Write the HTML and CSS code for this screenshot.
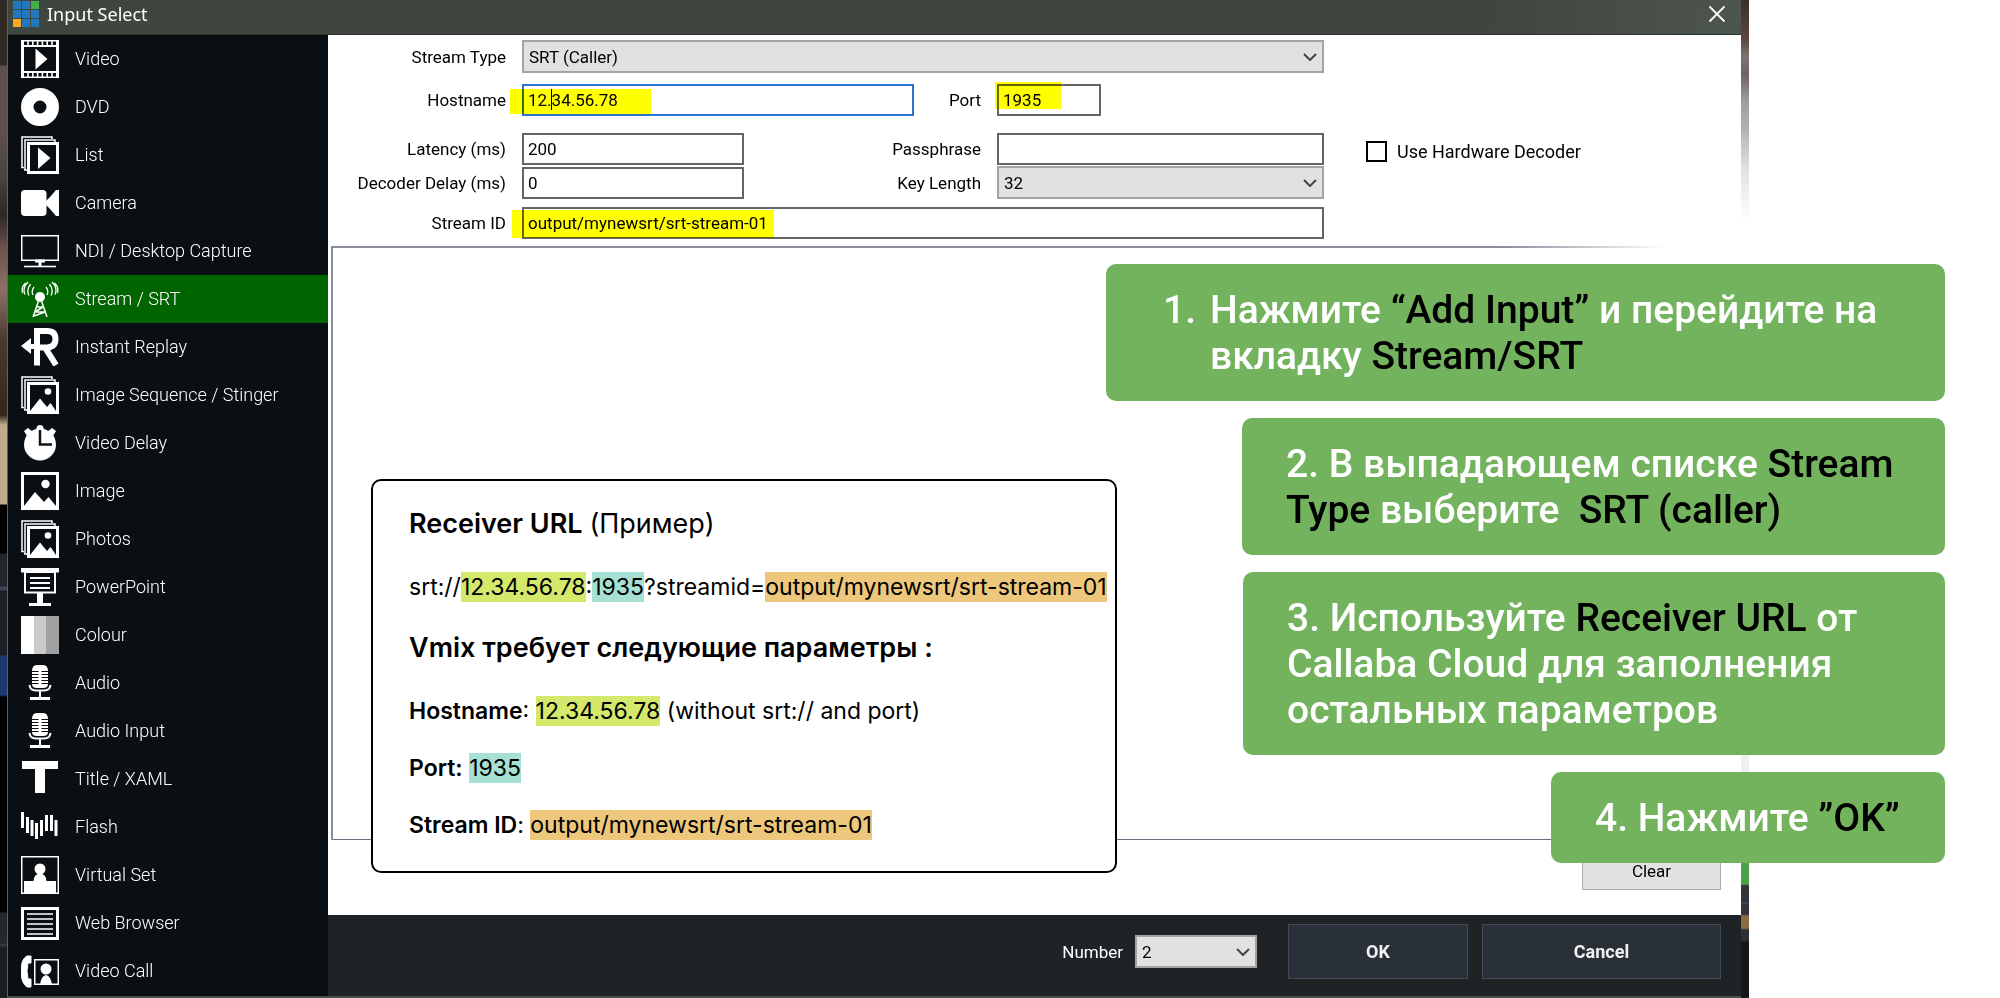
FILE: index.html
```html
<!DOCTYPE html>
<html lang="ru">
<head>
<meta charset="utf-8">
<title>Input Select</title>
<link rel="stylesheet" href="styles.css">
</head>
<body>
<svg class="sprite" aria-hidden="true">
  <symbol id="stack" viewBox="0 0 38 38">
    <path d="M1 31V1H31V3M0 31.500H3M4 34V4H34V6M3 34H6" fill="none" stroke="#fff" stroke-width="1.500"/>
    <rect x="7.500" y="7.500" width="29" height="29" fill="none" stroke="#fff" stroke-width="3"/>
  </symbol>
  <symbol id="photos" viewBox="0 0 38 38">
    <use href="#stack"/>
    <circle cx="27" cy="15.500" r="3.300" fill="#fff"/>
    <path d="M9 35 19 22.500 26 31 29.500 27 35 35V37H9Z" fill="#fff"/>
  </symbol>
  <symbol id="mic" viewBox="0 0 38 38">
    <path d="M11 7Q11 1 16 1H22Q27 1 27 7V20Q27 24 22 24H16Q11 24 11 20Z" fill="#fff"/>
    <path d="M11 7.500H17.500M20.500 7.500H27M11 10.500H17.500M20.500 10.500H27M11 13.500H17.500M20.500 13.500H27M11 16.500H17.500M20.500 16.500H27M11 19.500H17.500M20.500 19.500H27" stroke="#090f13" stroke-width="1.200"/>
    <path d="M8.500 21Q9 26.500 15 26.500H23Q29 26.500 29.500 21M19 26V33" fill="none" stroke="#fff" stroke-width="2"/>
    <path d="M9 34.500H29" stroke="#fff" stroke-width="3"/>
  </symbol>
</svg>
<div class="stage">
  <div class="desk desk-left"></div>
  <main class="window">
    <header class="titlebar">
      <svg class="logo" viewBox="0 0 26 26"><g fill="#2277c1"><path d="M0 0h8v8H0zM9 0h8v8H9zM0 9h8v8H0zM9 9h8v8H9zM18 9h8v8h-8zM9 18h8v8H9zM18 18h8v8h-8z"/></g><path fill="#44b049" d="M18 0h8v8h-8z"/><path fill="#fba91b" d="M0 18h8v8H0z"/></svg>
      <h1>Input Select</h1>
      <button class="close" aria-label="Close"><svg viewBox="0 0 18 18"><path d="M1.500 1.500 16.500 16.500M16.500 1.500 1.500 16.500" stroke="#fff" stroke-width="1.800"/></svg></button>
    </header>
    <div class="body">
      <nav class="sidebar">
        <button><svg viewBox="0 0 38 38"><path d="M0 0H38V38H0Z" fill="#fff"/><path d="M3 7H35V31H3Z" fill="#090f13"/><path d="M3 3.200H36M3 34.800H36" stroke="#090f13" stroke-width="3.400" stroke-dasharray="3.200 1.600"/><path d="M14.500 8.500 26.500 19 14.500 29.500Z" fill="#fff"/></svg>Video</button>
        <button><svg viewBox="0 0 38 38"><circle cx="19" cy="19" r="12.750" fill="none" stroke="#fff" stroke-width="12.500"/></svg>DVD</button>
        <button><svg viewBox="0 0 38 38"><use href="#stack"/><path d="M17 11.500 29.500 22 17 33Z" fill="#fff"/></svg>List</button>
        <button><svg viewBox="0 0 38 38"><rect y="6" width="25.500" height="26" rx="4" fill="#fff"/><path d="M25 17 29 13 35 6H38V32H35L29 25 25 21Z" fill="#fff"/></svg>Camera</button>
        <button><svg viewBox="0 0 38 38"><rect x=".750" y="3.750" width="36.500" height="24.500" fill="none" stroke="#fff" stroke-width="1.500"/><path d="M14 29H24M19 29V34" stroke="#fff" stroke-width="3"/><path d="M3 34.500H35" stroke="#fff" stroke-width="1.600"/></svg>NDI / Desktop Capture</button>
        <button class="active"><svg viewBox="0 0 38 38"><circle cx="19" cy="17" r="5" fill="#fff"/><path d="M17.500 21 12 37M20.500 21 26 37M16 27H22M14 32H24M13 36 24 32M14 32 22 27" fill="none" stroke="#fff" stroke-width="1.500"/><path d="M12 15Q10 11 13 7M8 15.500Q5 10 9.500 4M4 14.500Q1 8 7 2M1.500 13Q0 7 4.500 3M26 15Q28 11 25 7M30 15.500Q33 10 28.500 4M34 14.500Q37 8 31 2M36.500 13Q38 7 33.500 3" fill="none" stroke="#fff" stroke-width="1.300"/></svg>Stream / SRT</button>
        <button><svg viewBox="0 0 38 38"><path d="M16 37.500V3H26Q34.500 3 34.500 11T26 19.500H14M24 19.500 35 37" fill="none" stroke="#fff" stroke-width="6"/><path d="M0 18 10 10V16H14V21H10V26Z" fill="#fff"/></svg>Instant Replay</button>
        <button><svg viewBox="0 0 38 38"><use href="#photos"/></svg>Image Sequence / Stinger</button>
        <button><svg viewBox="0 0 38 38"><circle cx="19" cy="20.500" r="16" fill="#fff"/><path d="M3 7 7 4 12 8 6 12ZM35 7 31 4 26 8 32 12Z" fill="#fff"/><circle cx="19" cy="4.500" r="3.500" fill="#fff"/><path d="M19 6V20.500H31" fill="none" stroke="#10161a" stroke-width="2.500"/></svg>Video Delay</button>
        <button><svg viewBox="0 0 38 38"><rect x="1.500" y="1.500" width="35" height="35" fill="none" stroke="#fff" stroke-width="3"/><circle cx="24.500" cy="12" r="4.200" fill="#fff"/><path d="M3 34 14 20 23 30 27.500 25 35 34V36H3Z" fill="#fff"/></svg>Image</button>
        <button><svg viewBox="0 0 38 38"><use href="#photos"/></svg>Photos</button>
        <button><svg viewBox="0 0 38 38"><path d="M0 0H38V4.500H0ZM16 25H22V35H30V38H8V35H16Z" fill="#fff"/><rect x="4" y="4" width="30" height="20.500" fill="none" stroke="#fff" stroke-width="2"/><path d="M9 10H29M9 15H29M9 20H29" stroke="#fff" stroke-width="1.800"/></svg>PowerPoint</button>
        <button><svg viewBox="0 0 38 38"><path d="M0 0h13v38H0z" fill="#fff"/><path d="M13 0h12v38H13z" fill="#cacaca"/><path d="M25 0h13v38H25z" fill="#a0a0a0"/></svg>Colour</button>
        <button><svg viewBox="0 0 38 38"><use href="#mic"/></svg>Audio</button>
        <button><svg viewBox="0 0 38 38"><use href="#mic"/></svg>Audio Input</button>
        <button><svg viewBox="0 0 38 38"><rect x="1" y="1" width="36" height="8" fill="#fff"/><rect x="14" y="1" width="10" height="32" fill="#fff"/></svg>Title / XAML</button>
        <button><svg viewBox="0 0 38 38"><path d="M1.500 4V20M6.500 9V25M11 12V28M15.500 15V31M20.500 12V28M25.500 7V23M30.500 7V23M35 12V28" stroke="#fff" stroke-width="3"/></svg>Flash</button>
        <button><svg viewBox="0 0 38 38"><rect x=".750" y=".750" width="36.500" height="36.500" fill="none" stroke="#fff" stroke-width="1.500"/><circle cx="19" cy="13" r="5.500" fill="#fff"/><path d="M3 25H12.500Q13 19 17 18H21Q25 19 25.500 25H35V37H3Z" fill="#fff"/></svg>Virtual Set</button>
        <button><svg viewBox="0 0 38 38"><rect x="1.500" y="4.500" width="35" height="30" fill="none" stroke="#fff" stroke-width="3"/><path d="M6 10H32M6 15H32M6 20H32M6 25H32M6 30H32" stroke="#fff" stroke-width="1.500"/></svg>Web Browser</button>
        <button><svg viewBox="0 0 38 38"><path d="M8 4H10V11H7Q5 19 7 27H10V35H6Q0 31 0 19T6 4Z" fill="#fff" stroke="#fff" stroke-linejoin="round"/><rect x="13.750" y="7.750" width="23.500" height="24.500" fill="none" stroke="#fff" stroke-width="1.500"/><circle cx="25" cy="17" r="5.500" fill="#fff"/><path d="M19 33Q20 24 25 23 30 24 31 33Z" fill="#fff"/></svg>Video Call</button>
      </nav>
      <section class="panel">
        <form class="form" id="stream-form">
          <div class="fields">
            <div class="row">
              <label for="type">Stream Type</label>
              <div class="field grow"><select id="type"><option>SRT (Caller)</option></select><svg class="arrow" viewBox="0 0 14 8"><path d="M1 1 7 7 13 1"/></svg></div>
            </div>
            <div class="row row-host">
              <label for="host">Hostname</label>
              <div class="field grow"><input id="host" class="focused" value="12.34.56.78"><i class="marker marker-host"></i><i class="caret"></i></div>
              <label for="port" class="label-short">Port</label>
              <div class="side"><div class="field port"><input id="port" value="1935"><i class="marker marker-port"></i></div></div>
            </div>
            <div class="row row-latency">
              <label for="latency">Latency (ms)</label>
              <div class="field small"><input id="latency" value="200"></div>
              <label for="pass" class="label-grow">Passphrase</label>
              <div class="field side"><input id="pass"></div>
            </div>
            <div class="row row-delay">
              <label for="delay">Decoder Delay (ms)</label>
              <div class="field small"><input id="delay" value="0"></div>
              <label for="key" class="label-grow">Key Length</label>
              <div class="field side"><select id="key"><option>32</option></select><svg class="arrow" viewBox="0 0 14 8"><path d="M1 1 7 7 13 1"/></svg></div>
            </div>
            <div class="row row-id">
              <label for="sid">Stream ID</label>
              <div class="field grow"><input id="sid" value="output/mynewsrt/srt-stream-01"><i class="marker marker-id"></i></div>
            </div>
          </div>
          <label class="check"><input type="checkbox">Use Hardware Decoder</label>
        </form>
        <div class="listbox"></div>
        <div class="clear-row"><button class="clear">Clear</button></div>
        <footer class="footer">
          <label for="num">Number</label>
          <div class="field number"><select id="num"><option>2</option></select><svg class="arrow" viewBox="0 0 14 8"><path d="M1 1 7 7 13 1"/></svg></div>
          <button class="ok">OK</button>
          <button class="cancel">Cancel</button>
        </footer>
      </section>
    </div>
  </main>
  <div class="desk desk-right"></div>

  <aside class="note">
    <h2>Receiver URL <span>(Пример)</span></h2>
    <p>srt://<mark class="lime">12.34.56.78</mark>:<mark class="mint">1935</mark>?streamid=<mark class="sand">output/mynewsrt/srt-stream-01</mark></p>
    <h2>Vmix требует следующие параметры :</h2>
    <p><b>Hostname</b>: <mark class="lime">12.34.56.78</mark> (without srt:// and port)</p>
    <p><b>Port:</b> <mark class="mint">1935</mark></p>
    <p><b>Stream ID</b>: <mark class="sand">output/mynewsrt/srt-stream-01</mark></p>
  </aside>

  <div class="steps">
    <div class="step step-1"><span>1.</span><p>Нажмите <b>“Add Input”</b> и перейдите на вкладку <b>Stream/SRT</b></p></div>
    <div class="step step-2"><p>2. В выпадающем списке <b>Stream Type</b> выберите &nbsp;<b>SRT (caller)</b></p></div>
    <div class="step step-3"><p>3. Используйте <b>Receiver URL</b> от Callaba Cloud для заполнения остальных параметров</p></div>
    <div class="step step-4"><p>4. Нажмите <b>”OK”</b></p></div>
  </div>
</div>
</body>
</html>
```

FILE: styles.css
```css
* { box-sizing: border-box; }
body { margin: 0; background: #fff; font-family: Roboto, "Liberation Sans", sans-serif; font-size: 17px; color: #000; }
h1, h2, p { margin: 0; }
button, input, select { font: inherit; color: inherit; border-radius: 0; }
.sprite { position: absolute; width: 0; height: 0; }

.stage { position: relative; display: grid; grid-template-columns: 7px 1fr 8px 251px; min-height: 100vh; overflow: hidden; }
.desk-left { background: linear-gradient(#2f2823 0 65px, #5c514c 66px 130px, #4a403c 180px, #2c2626 214px, #6e5450 250px, #8d7068 290px, #4a3932 340px, #33261e 415px, #c0ab8c 425px 504px, #000 505px 553px, #22262c 554px 586px, #3e4854 587px 590px, #1c2026 591px 655px, #1d3a70 656px 695px, #000 697px 912px, #24282e 913px 943px, #343a44 945px, #1a1e22 948px); }
.desk-right { background: linear-gradient(#3b2f28, #5c4840 40px, #7d7471 56px, #6f6462 75px, #9c9a9b 100px, #b5b3b4 130px, #e5e0e0 170px, #fff 220px 730px, #f0f0f0 745px 770px, #4da04a 862px 884px, #30353a 886px 902px, #454c55 903px, #30353a 905px 914px, #8a6b42 916px 928px, #2c3136 930px 940px, #14181b 942px); }
.window { display: flex; flex-direction: column; min-width: 0; border-left: 1px solid #5c635c; border-bottom: 2px solid #4a4f4d; }

.titlebar { display: flex; gap: 8px; height: 35px; padding: 1px 15px 0 5px; background: linear-gradient(100deg, #3f463f 85%, #4c554e); color: #fff; border-bottom: 1px solid #2c322c; }
.logo { width: 26px; height: 26px; }
.titlebar h1 { flex: 1; font: 400 18px/26px "Noto Sans", sans-serif; }
.close { width: 18px; height: 26px; padding: 0; border: 0; background: none; }
.close svg { display: block; width: 18px; height: 26px; }

.body { display: flex; flex: 1; }
.sidebar { width: 320px; flex: none; background: #090f13; }
.sidebar button { display: flex; align-items: center; gap: 16px; width: 100%; height: 48px; padding: 0 13px 1px; border: 0; background: none; color: #fff; font-size: 18px; font-weight: 300; text-align: left; white-space: nowrap; }
.sidebar .active { background: #006400; }
.sidebar svg { width: 38px; height: 38px; flex: none; }

.panel { display: flex; flex: 1; flex-direction: column; min-width: 0; background: #fff; }
.form { display: flex; gap: 42px; padding-top: 5px; white-space: nowrap; }
.fields { width: 996px; }
.row { display: flex; align-items: center; gap: 16px; height: 33px; }
.row > label { width: 178px; text-align: right; }
.row > .label-short { width: 51px; }
.row > .label-grow { flex: 1; width: auto; }
.row-host { margin-top: 10px; }
.row-latency { margin-top: 16px; }
.row-delay { margin-top: 1px; }
.row-id { margin-top: 7px; }
.field { position: relative; }
.grow { flex: 1; }
.small { width: 222px; }
.side { width: 327px; flex: none; }
.port { width: 104px; }
.field input, .field select { display: block; width: 100%; height: 32px; padding: 0 4px; border: 2px solid #666; background: #fff; appearance: none; outline: 0; }
.field select { height: 33px; padding: 0 5px; border-color: #a3a3a3; background: #e1e1e1; }
.field .focused { border-color: #2a74cf; }
.arrow { position: absolute; right: 7px; top: 13px; width: 14px; height: 8px; fill: none; stroke: #444; stroke-width: 2; pointer-events: none; }
.marker { position: absolute; background: #ff0; mix-blend-mode: multiply; pointer-events: none; }
.marker-host { left: -12px; top: 5px; width: 141px; height: 25px; }
.marker-port { left: -2px; top: -2px; width: 66px; height: 27px; }
.marker-id { left: -10px; top: 3px; width: 262px; height: 28px; }
.caret { position: absolute; left: 29px; top: 5px; width: 1px; height: 21px; background: #000; }
.check { display: flex; align-items: center; gap: 10px; height: 22px; margin-top: 100px; font-size: 18px; }
.check input { appearance: none; width: 21px; height: 21px; margin: 0; border: 2px solid #000; background: #fff; }

.listbox { flex: 1; margin: 7px 20px 0 3px; border-left: 2px solid #888d99; background: linear-gradient(90deg, #888d99 84%, #fff 96%) top / 100% 2px no-repeat, linear-gradient(#666d7c, #666d7c) bottom / 100% 1px no-repeat; }
.clear-row { display: flex; justify-content: flex-end; padding: 12px 20px 25px; }
.clear { width: 139px; height: 38px; border: 1px solid #adadad; background: #e2e2e2; }

.footer { display: flex; align-items: center; justify-content: flex-end; height: 81px; padding: 0 20px 8px; background: #1e2326; color: #fff; }
.number { width: 122px; margin: 0 31px 0 12px; color: #000; }
.footer button { height: 55px; border: 1px solid #424b57; background: #2a3038; color: #f0f0f0; font-size: 18px; font-weight: 700; }
.ok { width: 180px; margin-right: 14px; }
.cancel { width: 239px; }

.note { position: absolute; left: 371px; top: 479px; width: 746px; height: 394px; padding: 26px 10px 28px 36px; border: 2px solid #000; border-radius: 10px; background: #fff; font: 400 23px/30px Inter, sans-serif; white-space: nowrap; }
.note h2 { font-size: 27px; line-height: 34px; font-weight: 600; }
.note h2 span { font-weight: 400; }
.note p { margin-top: 27px; }
.note h2 + p { margin-top: 31px; }
.note p + h2 { margin-top: 29px; }
.note b { font-weight: 600; }
.note mark { padding: 1px 0; color: inherit; }
.note .lime { background: #d4e86b; }
.note .mint { background: #a6e0d2; }
.note .sand { background: #edc77b; }

.steps { position: absolute; right: 55px; top: 264px; display: flex; flex-direction: column; align-items: flex-end; gap: 17px; color: #fff; font-size: 39px; line-height: 46px; font-weight: 500; }
.step { display: flex; gap: 14px; padding: 23px 44px 22px; border-radius: 10px; background: #73b35e; }
.step b { color: #000; font-weight: 500; }
.step-1 { width: 839px; padding-left: 57px; }
.step-2 { width: 703px; }
.step-3 { width: 702px; }
.step-4 { width: 394px; }
```
